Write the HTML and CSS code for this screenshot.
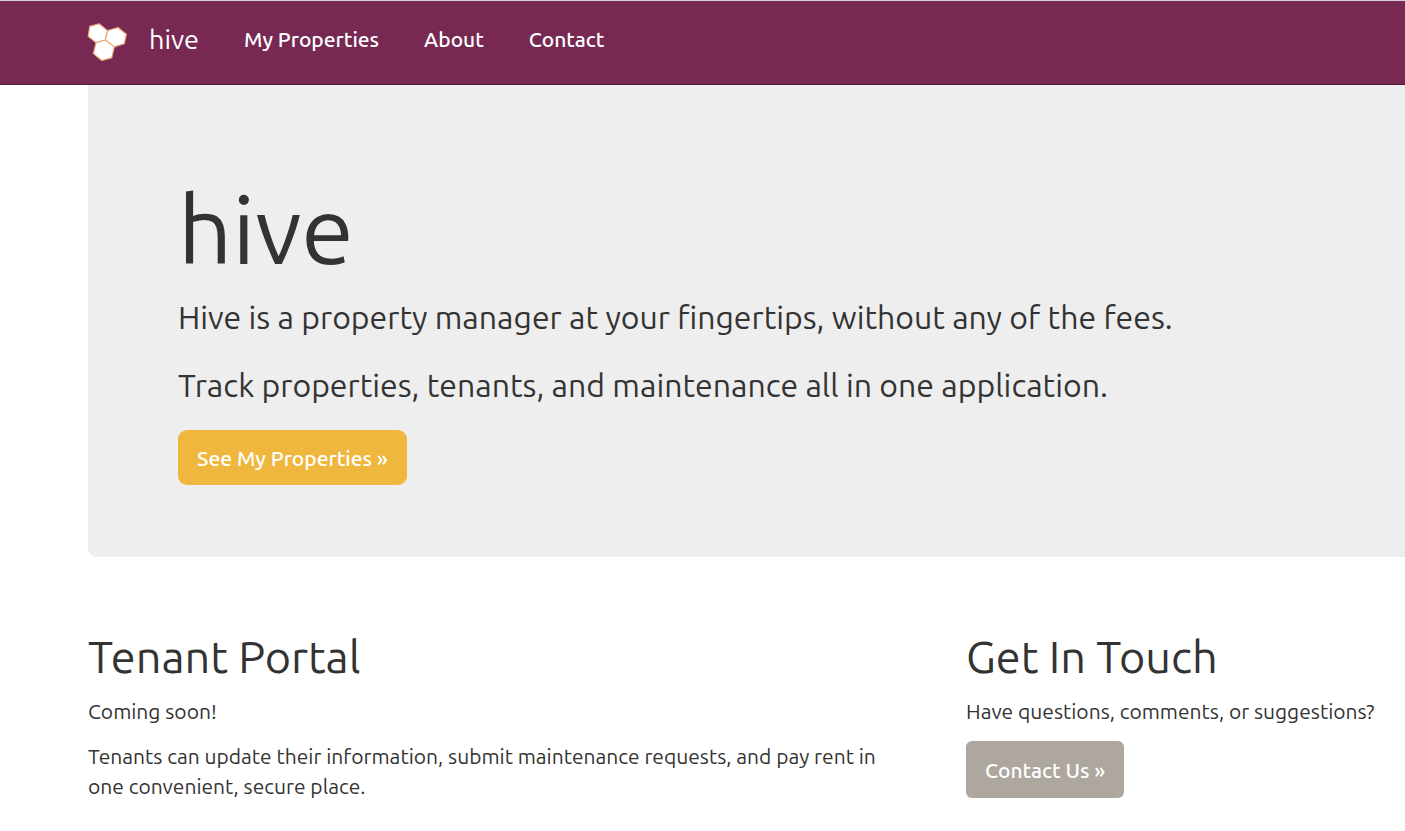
FILE: index.html
```html
<!DOCTYPE html>
<html lang="en">
<head>
<meta charset="utf-8">
<meta name="viewport" content="width=device-width, initial-scale=1">
<title>hive</title>
<link rel="stylesheet" href="styles.css">
</head>
<body>
<header class="navbar">
  <a class="brand" href="#">
    <svg class="logo" viewBox="0.5 -3 38 42" aria-hidden="true">
      <g fill="#fff" stroke="#e6a873" stroke-width="1.1" stroke-linejoin="round">
        <path d="M3 6L12 3.500L20 10L18 19L9 21.500L1.500 15.500Z"/>
        <path d="M20 10L30 7L38 13.500L36 22.500L26.500 25.500L18 19Z"/>
        <path d="M9 21.500L18 19L26.500 25.500L24 36L14.500 38.500L6.500 32Z"/>
      </g>
    </svg>
    <span>hive</span>
  </a>
  <nav class="links">
    <a href="#">My Properties</a>
    <a href="#">About</a>
    <a href="#">Contact</a>
  </nav>
</header>
<main class="page">
  <section class="jumbotron">
    <h1>hive</h1>
    <p>Hive is a property manager at your fingertips, without any of the fees.</p>
    <p>Track properties, tenants, and maintenance all in one application.</p>
    <a class="btn btn-large" href="#">See My Properties »</a>
  </section>
  <div class="row">
    <section class="portal">
      <h2>Tenant Portal</h2>
      <p>Coming soon!</p>
      <p>Tenants can update their information, submit maintenance requests, and pay rent in one convenient, secure place.</p>
    </section>
    <section class="touch">
      <h2>Get In Touch</h2>
      <p>Have questions, comments, or suggestions?</p>
      <a class="btn btn-muted" href="#">Contact Us »</a>
    </section>
  </div>
</main>
</body>
</html>
```
FILE: styles.css
```css
* { box-sizing: border-box; }
body {
  margin: 0;
  background: #fff;
  color: #333;
  font: 21px/30px Ubuntu, "Noto Sans", sans-serif;
  overflow-x: hidden;
}
h1, h2, p { margin: 0; }
a { color: inherit; text-decoration: none; }
.navbar {
  display: flex;
  align-items: center;
  gap: 45px;
  height: 85px;
  padding: 0 87px 8px;
  background: #772953;
  border-top: 1px solid #d5d0d6;
  border-bottom: 1px solid #4f1b37;
  color: #fff;
}
.brand { display: flex; align-items: center; gap: 22px; font-size: 27px; font-weight: 450; }
.logo { width: 40px; height: 44px; }
.links { display: flex; gap: 45px; font-weight: 480; }
.page { padding-left: 88px; }
.jumbotron {
  padding: 90px 90px 72px;
  background: #eee;
  border-radius: 0 0 0 9px;
}
.jumbotron h1 { font-size: 95px; line-height: 108px; font-weight: 450; margin-bottom: 11px; }
.jumbotron p { font-size: 32px; line-height: 46px; margin-bottom: 22px; }
.btn { display: inline-block; color: #fff; border-radius: 6px; font-weight: 480; }
.btn-large { padding: 13px 19px 12px; border-radius: 9px; background: #efb73e; }
.btn-muted { padding: 14px 19px 13px; background: #aea79f; }
.row { display: grid; grid-template-columns: 2fr 1fr; padding-top: 75px; }
.portal { padding-right: 75px; }
.row h2 { font-size: 45px; line-height: 50px; font-weight: 450; margin-bottom: 14px; }
.row p { margin-bottom: 15px; font-weight: 420; }
```
